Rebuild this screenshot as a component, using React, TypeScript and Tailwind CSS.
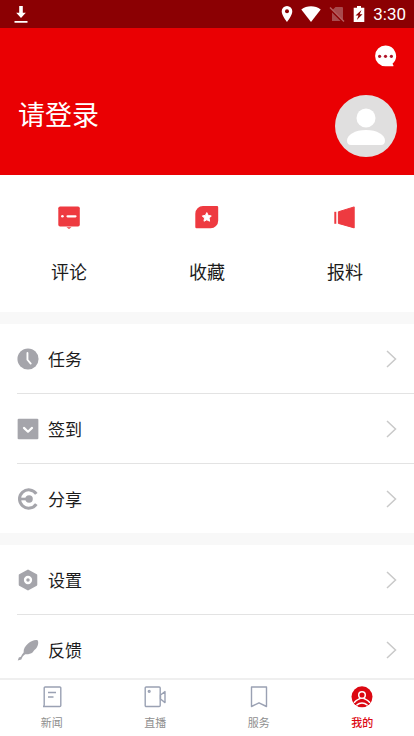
import { Fragment, useState } from "react";
import type { ReactNode } from "react";
import clsx from "clsx";

interface Item {
  id: string;
  label: string;
  icon: ReactNode;
}

const actions: Item[] = [
  {
    id: "comments",
    label: "评论",
    icon: (
      <svg viewBox="0 0 24 24" className="h-6 w-6" aria-hidden="true">
        <rect x="1.300" y="1.500" width="21.500" height="20" rx="1.800" fill="#ee3a40" />
        <path d="M9.500 22.200h5L12 24z" fill="#ee3a40" />
        <circle cx="5.400" cy="11.300" r="1.300" fill="#fff" />
        <path d="M10.500 11.300h8" stroke="#fff" strokeWidth="2.200" strokeLinecap="round" />
      </svg>
    ),
  },
  {
    id: "favorites",
    label: "收藏",
    icon: (
      <svg viewBox="0 0 24 24" className="h-6 w-6" aria-hidden="true">
        <path
          d="M8 1h14a1.200 1.200 0 0 1 1.200 1.200v13.500a7.500 7.500 0 0 1-7.500 7.500H1.500A1.200 1.200 0 0 1 .3 22V8.700A7.700 7.700 0 0 1 8 1z"
          fill="#ee3a40"
        />
        <path
          d="m11.800 7.600 1.400 2.800 3.100.5-2.200 2.200.5 3.100-2.800-1.400L9 16.200l.5-3.100-2.200-2.200 3.100-.5z"
          fill="#fff"
          stroke="#fff"
          strokeWidth="1"
          strokeLinejoin="round"
        />
      </svg>
    ),
  },
  {
    id: "tips",
    label: "报料",
    icon: (
      <svg viewBox="0 0 24 24" className="h-6 w-6" aria-hidden="true">
        <path d="M1.300 6.800h2v12h-2z" fill="#ee3a40" />
        <path
          d="M5.400 6.800 21.200 1.900v21L5.400 18.400z"
          fill="#ee3a40"
          stroke="#ee3a40"
          strokeLinejoin="round"
        />
      </svg>
    ),
  },
];

const menuGroups: Item[][] = [
  [
    {
      id: "tasks",
      label: "任务",
      icon: (
        <svg viewBox="0 0 22 22" className="h-6 w-6" aria-hidden="true">
          <circle cx="11" cy="11" r="9.700" fill="#a5a5ab" />
          <path
            d="M10.500 5.500v6.200l3 3.500"
            fill="none"
            stroke="#fff"
            strokeWidth="1.700"
            strokeLinecap="round"
            strokeLinejoin="round"
          />
        </svg>
      ),
    },
    {
      id: "checkin",
      label: "签到",
      icon: (
        <svg viewBox="0 0 22 22" className="h-6 w-6" aria-hidden="true">
          <rect x="1.500" y="1.500" width="19" height="19" rx="1" fill="#a5a5ab" />
          <path
            d="m7.300 10 3.700 3.500 3.700-3.500"
            fill="none"
            stroke="#fff"
            strokeWidth="2"
            strokeLinecap="round"
            strokeLinejoin="round"
          />
        </svg>
      ),
    },
    {
      id: "share",
      label: "分享",
      icon: (
        <svg viewBox="0 0 22 22" className="h-6 w-6" aria-hidden="true">
          <g fill="none" stroke="#a5a5ab">
            <path d="M18.600 6.300A8.400 8.400 0 1 0 18.600 15.700" strokeWidth="2.800" />
            <path d="M2.500 11H12" strokeWidth="2.400" />
          </g>
          <circle cx="12" cy="11" r="3.400" fill="#a5a5ab" />
        </svg>
      ),
    },
  ],
  [
    {
      id: "settings",
      label: "设置",
      icon: (
        <svg viewBox="0 0 22 22" className="h-6 w-6" aria-hidden="true">
          <path
            d="m11 2.300 7.600 4.300v8.800L11 19.700l-7.600-4.300V6.600z"
            fill="#a5a5ab"
            stroke="#a5a5ab"
            strokeWidth="1.800"
            strokeLinejoin="round"
          />
          <circle cx="11" cy="11" r="2.700" fill="none" stroke="#fff" strokeWidth="2.200" />
        </svg>
      ),
    },
    {
      id: "feedback",
      label: "反馈",
      icon: (
        <svg viewBox="0 0 22 22" className="h-6 w-6" aria-hidden="true">
          <path
            d="M19.600 1.900c1.300 1.500.9 4-.2 6.100-.8 1.500-1.900 2.600-3.100 3.600l-.9 1.400c-2 1.600-4.500 2.200-7 1.900-1.600 1-2.700 2.500-3.500 4.800l-3.300.9 1-2.700 1.900-.7c.6-1.500 1.400-2.800 2.500-4-.2-3.300 1.500-6 4.100-8.200 2.700-2.200 6-3.700 8.500-3.100z"
            fill="#a5a5ab"
          />
        </svg>
      ),
    },
  ],
];

const tabs: Item[] = [
  {
    id: "news",
    label: "新闻",
    icon: (
      <svg
        viewBox="0 0 24 24"
        className="h-6 w-6"
        fill="none"
        stroke="#9aa1b3"
        strokeWidth="1.400"
        aria-hidden="true"
      >
        <path d="M3 22.500h16.800a1 1 0 0 0 1-1V4a1 1 0 0 0-1-1H5.200a1 1 0 0 0-1 1v17c0 1-.4 1.500-1.200 1.500z" />
        <path d="M8 8.500h8M8 13h5.500" />
      </svg>
    ),
  },
  {
    id: "live",
    label: "直播",
    icon: (
      <svg
        viewBox="0 0 24 24"
        className="h-6 w-6"
        fill="none"
        stroke="#9aa1b3"
        strokeWidth="1.400"
        aria-hidden="true"
      >
        <rect x="2.200" y="3" width="15" height="19.500" rx="1" />
        <path d="M17.500 11 22 7.600v11L17.500 15z" strokeLinejoin="round" />
        <circle cx="6.200" cy="7.300" r=".9" />
      </svg>
    ),
  },
  {
    id: "services",
    label: "服务",
    icon: (
      <svg
        viewBox="0 0 24 24"
        className="h-6 w-6"
        fill="none"
        stroke="#9aa1b3"
        strokeWidth="1.400"
        aria-hidden="true"
      >
        <path d="M4.500 3h15v19.500L12 18.800l-7.500 3.700z" strokeLinejoin="round" />
      </svg>
    ),
  },
  {
    id: "mine",
    label: "我的",
    icon: (
      <svg viewBox="0 0 24 24" className="h-6 w-6" aria-hidden="true">
        <circle cx="12" cy="12.800" r="10.500" fill="#dc0812" />
        <g fill="none" stroke="#fff" strokeWidth="1.500" strokeLinecap="round">
          <circle cx="12" cy="11" r="3.300" />
          <path d="M4.500 18.300c1.500-2 3.300-2.700 5.500-3.800M19.500 18.300c-1.500-2-3.300-2.700-5.500-3.800" />
          <path d="M7 20.800c2.800-2.300 7.200-2.300 10 0" />
        </g>
      </svg>
    ),
  },
];

function StatusBar() {
  return (
    <div className="flex h-7 shrink-0 items-center justify-between bg-[#8b0003] pl-3 pr-2 text-white">
      <svg viewBox="0 0 18 20" className="h-5 w-[18px]" fill="currentColor" aria-hidden="true">
        <path d="M7.200 2h3.600v6.800h3L9 14 4.200 8.800h3zM2.500 17h13v1.800h-13z" />
      </svg>
      <div className="flex items-center">
        <svg viewBox="0 0 12 18" className="h-[18px] w-3" aria-hidden="true">
          <path
            d="M6 1a5.300 5.300 0 0 0-5.300 5.300C.7 10.400 6 17 6 17s5.300-6.600 5.300-10.700A5.300 5.300 0 0 0 6 1z"
            fill="#fff"
          />
          <circle cx="6" cy="6.300" r="2" fill="#8b0003" />
        </svg>
        <svg viewBox="0 0 20 18" className="ml-2 h-[18px] w-5" aria-hidden="true">
          <path d="M10 17 .3 4.500C5.800.2 14.200.2 19.700 4.500z" fill="#fff" />
        </svg>
        <svg viewBox="0 0 16 18" className="ml-2 h-[18px] w-4" aria-hidden="true">
          <path d="M6.500 2H13a1 1 0 0 1 1 1v13H3V5.500z" fill="#a84a4d" />
          <path d="m1 4 14 14" stroke="#8b0003" strokeWidth="2" />
          <path d="m1 2.500 14 14" stroke="#b65e60" strokeWidth="1.400" />
        </svg>
        <svg viewBox="0 0 12 18" className="ml-2 h-[18px] w-3" aria-hidden="true">
          <path d="M4 1h4v1.800h3.300V17H.7V2.800H4z" fill="#fff" />
          <path d="m8.500 5-6 5.500h3L3.800 15l5.700-5.800H6.700z" fill="#8b0003" />
        </svg>
        <span className="ml-2 font-['Roboto',sans-serif] text-[17px] leading-7">3:30</span>
      </div>
    </div>
  );
}

function ProfileHeader() {
  return (
    <header className="bg-[#ea0003] pb-[18px] pl-[18px] pr-[17px] pt-4">
      <div className="flex justify-end">
        <button type="button" aria-label="消息" className="block">
          <svg viewBox="0 0 24 24" className="h-6 w-6" aria-hidden="true">
            <path
              d="M12.500 1.500a10.400 10.400 0 1 0 0 20.800h7.300c.7 0 .9-.6.5-1.100l-.8-1.500A10.400 10.400 0 0 0 12.500 1.500z"
              fill="#fff"
            />
            <g fill="#b01328">
              <circle cx="6.600" cy="12.300" r="1.600" />
              <circle cx="12.500" cy="12.300" r="1.600" />
              <circle cx="18.400" cy="12.300" r="1.600" />
            </g>
          </svg>
        </button>
      </div>
      <div className="mt-[27px] flex items-start justify-between">
        <button type="button" className="text-[27px] leading-[38px] text-white">
          请登录
        </button>
        <button type="button" aria-label="头像" className="block">
          <svg viewBox="0 0 62 62" className="h-[62px] w-[62px]" aria-hidden="true">
            <circle cx="31" cy="31" r="31" fill="#e0dfdf" />
            <circle cx="31" cy="23" r="9.500" fill="#fff" />
            <path
              d="M12 45.500c0-5.500 8-10.500 19-10.500s19 5 19 10.500c0 3-1.500 4.500-4 4.500H16c-2.500 0-4-1.500-4-4.500z"
              fill="#fff"
            />
          </svg>
        </button>
      </div>
    </header>
  );
}

function MenuRow({ item }: { item: Item }) {
  return (
    <li className="pl-[17px]">
      <button type="button" className="flex h-[69px] w-full items-center pr-[17px] text-left">
        <span className="-ml-px mr-2">{item.icon}</span>
        <span className="flex-1 text-[17px] leading-6 text-[#1c1c1c]">{item.label}</span>
        <svg
          viewBox="0 0 12 20"
          className="h-5 w-3"
          fill="none"
          stroke="#c9c9c9"
          strokeWidth="1.500"
          aria-hidden="true"
        >
          <path d="m2 2 8.500 8L2 18" />
        </svg>
      </button>
    </li>
  );
}

export default function App() {
  const [activeTab, setActiveTab] = useState("mine");

  return (
    <div className="flex h-dvh flex-col bg-white font-['Noto_Sans_CJK_SC',sans-serif]">
      <StatusBar />

      <main className="min-h-0 flex-1 overflow-y-auto bg-[#f8f8f8] [scrollbar-width:none]">
        <ProfileHeader />

        {/* Quick actions */}
        <div className="grid grid-cols-3 bg-white pb-[27px] pt-[30px]">
          {actions.map(action => (
            <button
              key={action.id}
              type="button"
              className="flex flex-col items-center gap-7 text-lg leading-7 text-[#1c1c1c]"
            >
              {action.icon}
              {action.label}
            </button>
          ))}
        </div>

        {/* Menu */}
        {menuGroups.map((group, i) => (
          <ul key={i} className="mt-3 bg-white">
            {group.map((item, j) => (
              <Fragment key={item.id}>
                {j > 0 && <li role="separator" className="ml-[17px] h-px bg-[#e3e3e3]" />}
                <MenuRow item={item} />
              </Fragment>
            ))}
          </ul>
        ))}
      </main>

      {/* Bottom tabs */}
      <nav className="grid shrink-0 grid-cols-4 border-t-2 border-[#efefef] bg-white py-1">
        {tabs.map(tab => (
          <button
            key={tab.id}
            type="button"
            onClick={() => setActiveTab(tab.id)}
            className={clsx(
              "flex flex-col items-center gap-1 text-[11px] leading-5",
              tab.id === activeTab ? "font-medium text-[#dc0812]" : "text-[#8e8e8e]"
            )}
          >
            {tab.icon}
            {tab.label}
          </button>
        ))}
      </nav>
    </div>
  );
}
